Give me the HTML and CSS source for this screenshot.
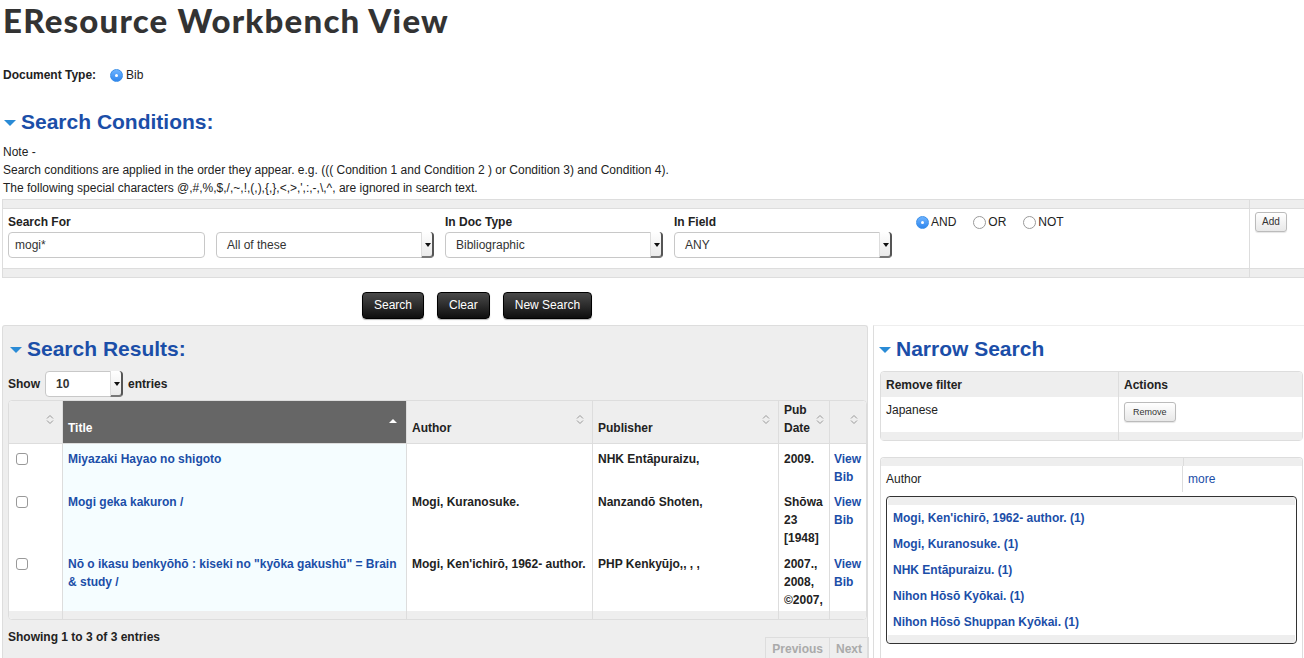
FILE: index.html
```html
<!DOCTYPE html>
<html>
<head>
<meta charset="utf-8">
<link rel="stylesheet" href="styles.css">
</head>
<body>
<div class="page">
  <h1 class="title">EResource Workbench View</h1>
  <div class="doctype"><span class="doclbl">Document Type:</span><span class="radio on"></span><span>Bib</span></div>

  <h2 class="section sc"><span class="tri"></span>Search Conditions:</h2>
  <div class="note">Note -<br>Search conditions are applied in the order they appear. e.g. ((( Condition 1 and Condition 2 ) or Condition 3) and Condition 4).<br>The following special characters @,#,%,$,/,~,!,(,),{,},&lt;,&gt;,',:,-,\,^, are ignored in search text.</div>

  <div class="cond">
    <div class="cond-bar"><div class="cb-main"></div><div class="cb-side"></div></div>
    <div class="cond-row">
      <div class="cond-main">
        <div class="fld">
          <label class="flbl">Search For</label>
          <div class="input w197">mogi*</div>
        </div>
        <div class="fld">
          <label class="flbl">&nbsp;</label>
          <div class="select w218">All of these<span class="arr"></span></div>
        </div>
        <div class="fld">
          <label class="flbl">In Doc Type</label>
          <div class="select w218">Bibliographic<span class="arr"></span></div>
        </div>
        <div class="fld">
          <label class="flbl">In Field</label>
          <div class="select w218">ANY<span class="arr"></span></div>
        </div>
        <div class="ops">
          <span class="op"><span class="radio on"></span>AND</span>
          <span class="op"><span class="radio"></span>OR</span>
          <span class="op"><span class="radio"></span>NOT</span>
        </div>
      </div>
      <div class="cond-side"><span class="smallbtn">Add</span></div>
    </div>
    <div class="cond-bar"><div class="cb-main"></div><div class="cb-side"></div></div>
  </div>

  <div class="buttons">
    <span class="bbtn">Search</span>
    <span class="bbtn">Clear</span>
    <span class="bbtn">New Search</span>
  </div>

  <div class="lower">
    <div class="results">
      <h2 class="section sr"><span class="tri"></span>Search Results:</h2>
      <div class="showrow"><span>Show</span><div class="select w78">10<span class="arr"></span></div><span>entries</span></div>
      <table class="rt">
        <thead>
          <tr>
            <th class="c0"><span class="sort"><svg width="8" height="11" viewBox="0 0 8 11"><path d="M1 4.5 L4 1.5 L7 4.5 M1 6.5 L4 9.5 L7 6.5" fill="none" stroke="#999" stroke-width="1"/></svg></span></th>
            <th class="c1 sorted">Title<span class="sort"><svg width="8" height="6" viewBox="0 0 8 6"><path d="M0 5 L4 1 L8 5 Z" fill="#fff"/></svg></span></th>
            <th class="c2">Author<span class="sort"><svg width="8" height="11" viewBox="0 0 8 11"><path d="M1 4.5 L4 1.5 L7 4.5 M1 6.5 L4 9.5 L7 6.5" fill="none" stroke="#999" stroke-width="1"/></svg></span></th>
            <th class="c3">Publisher<span class="sort"><svg width="8" height="11" viewBox="0 0 8 11"><path d="M1 4.5 L4 1.5 L7 4.5 M1 6.5 L4 9.5 L7 6.5" fill="none" stroke="#999" stroke-width="1"/></svg></span></th>
            <th class="c4">Pub<br>Date<span class="sort"><svg width="8" height="11" viewBox="0 0 8 11"><path d="M1 4.5 L4 1.5 L7 4.5 M1 6.5 L4 9.5 L7 6.5" fill="none" stroke="#999" stroke-width="1"/></svg></span></th>
            <th class="c5"><span class="sort"><svg width="8" height="11" viewBox="0 0 8 11"><path d="M1 4.5 L4 1.5 L7 4.5 M1 6.5 L4 9.5 L7 6.5" fill="none" stroke="#999" stroke-width="1"/></svg></span></th>
          </tr>
        </thead>
        <tbody>
          <tr class="r1">
            <td class="c0"><span class="chk"></span></td>
            <td class="c1"><a>Miyazaki Hayao no shigoto</a></td>
            <td class="c2"></td>
            <td class="c3">NHK Entāpuraizu,</td>
            <td class="c4">2009.</td>
            <td class="c5"><a>View Bib</a></td>
          </tr>
          <tr class="r2">
            <td class="c0"><span class="chk"></span></td>
            <td class="c1"><a>Mogi geka kakuron /</a></td>
            <td class="c2">Mogi, Kuranosuke.</td>
            <td class="c3">Nanzandō Shoten,</td>
            <td class="c4">Shōwa 23 [1948]</td>
            <td class="c5"><a>View Bib</a></td>
          </tr>
          <tr class="r3">
            <td class="c0"><span class="chk"></span></td>
            <td class="c1"><a>Nō o ikasu benkyōhō : kiseki no "kyōka gakushū" = Brain &amp; study /</a></td>
            <td class="c2">Mogi, Ken'ichirō, 1962- author.</td>
            <td class="c3">PHP Kenkyūjo,, , ,</td>
            <td class="c4">2007., 2008, ©2007,</td>
            <td class="c5"><a>View Bib</a></td>
          </tr>
          <tr class="rfoot">
            <td class="c0"></td><td class="c1"></td><td class="c2"></td><td class="c3"></td><td class="c4"></td><td class="c5"></td>
          </tr>
        </tbody>
      </table>
      <div class="rfooter">
        <span class="showing">Showing 1 to 3 of 3 entries</span>
        <div class="pager"><span class="pg">Previous</span><span class="pg">Next</span></div>
      </div>
    </div>

    <div class="narrow">
      <h2 class="section ns"><span class="tri"></span>Narrow Search</h2>
      <table class="ft">
        <tr class="fh"><th class="fa">Remove filter</th><th class="fb">Actions</th></tr>
        <tr class="fr"><td class="fa">Japanese</td><td class="fb"><span class="smallbtn rm">Remove</span></td></tr>
        <tr class="fbar"><td class="fa"></td><td class="fb"></td></tr>
      </table>

      <div class="facet">
        <div class="facet-bar"><div class="fba"></div><div class="fbb"></div></div>
        <div class="facet-row"><span class="fname">Author</span><span class="fmore"><a>more</a></span></div>
        <div class="facet-box">
          <div class="fbox-bar"></div>
          <ul class="flist">
            <li><a>Mogi, Ken'ichirō, 1962- author. (1)</a></li>
            <li><a>Mogi, Kuranosuke. (1)</a></li>
            <li><a>NHK Entāpuraizu. (1)</a></li>
            <li><a>Nihon Hōsō Kyōkai. (1)</a></li>
            <li><a>Nihon Hōsō Shuppan Kyōkai. (1)</a></li>
          </ul>
          <div class="fbox-bar bottom"></div>
        </div>
      </div>
    </div>
  </div>
</div>
</body>
</html>
```

FILE: styles.css
```css
* { box-sizing: border-box; }
html, body { margin: 0; padding: 0; background: #fff; }
body {
  font-family: "Liberation Sans", Arial, sans-serif;
  font-size: 12px;
  color: #222;
  overflow: hidden;
}
.page { padding: 0 0 0 2px; width: 1304px; height: 658px; overflow: hidden; }

.title {
  margin: 0;
  padding: 0 0 0 1px;
  font-family: "Lato", "Liberation Sans", sans-serif;
  font-weight: 900;
  font-size: 33px;
  line-height: 40px;
  color: #333;
  letter-spacing: 1.2px;
  white-space: nowrap;
}

.doctype {
  display: flex;
  align-items: center;
  margin-top: 28px;
  height: 14px;
  padding-left: 1px;
}
.doclbl { font-weight: bold; font-size: 12px; width: 107px; }

.radio {
  display: inline-block;
  width: 13px; height: 13px;
  border-radius: 50%;
  border: 1px solid #9a9a9a;
  background: #fff;
  margin-right: 3px;
  position: relative;
  flex: none;
}
.radio.on {
  border-color: #3b8fe8;
  background: linear-gradient(#6db3ff, #2f86ee);
}
.radio.on::after {
  content: "";
  position: absolute;
  left: 4px; top: 4px;
  width: 3px; height: 3px;
  border-radius: 50%;
  background: #fff;
}

.section {
  margin: 0;
  display: flex;
  align-items: center;
  font-family: "Liberation Sans", Arial, sans-serif;
  font-weight: bold;
  font-size: 21px;
  letter-spacing: 0;
  color: #1b4ea8;
  height: 24px;
}
.section .tri {
  width: 0; height: 0;
  border-left: 6px solid transparent;
  border-right: 6px solid transparent;
  border-top: 6px solid #2a8bd6;
  margin: 2px 5px 0 2px;
}
.section.sc { margin-top: 28px; }

.note {
  margin-top: 9px;
  font-size: 12px;
  line-height: 18px;
  padding-left: 1px;
}

.cond {
  margin-top: 2px;
  border: 1px solid #ddd;
  border-right: none;
}
.cond-bar { display: flex; height: 8px; background: #eee; }
.cb-main { flex: 1; }
.cb-side { width: 55px; border-left: 1px solid #ddd; }
.cond-row { display: flex; height: 61px; background: #fff; border-top: 1px solid #ddd; border-bottom: 1px solid #ddd; }
.cond-main { flex: 1; display: flex; padding: 6px 0 0 5px; gap: 11px; }
.cond-side { width: 55px; border-left: 1px solid #ddd; padding: 3px 0 0 5px; }
.fld { display: flex; flex-direction: column; }
.flbl { font-weight: bold; font-size: 12px; height: 17px; line-height: 14px; }
.input, .select {
  height: 26px;
  border: 1px solid #c8c8c8;
  border-radius: 4px;
  background: #fff;
  line-height: 24px;
  padding-left: 6px;
  font-size: 12px;
  color: #333;
  position: relative;
}
.select { padding-left: 10px; }
.w197 { width: 197px; }
.w218 { width: 218px; }
.w78 { width: 78px; }
.select .arr {
  position: absolute;
  right: -1px; top: -1px; bottom: -1px;
  width: 13px;
  border-right: 2px solid #555;
  border-bottom: 2px solid #777;
  border-radius: 0 4px 4px 0;
  background: linear-gradient(#fff, #eaeaea);
  border-left: 1px solid #ddd;
}
.select .arr::after {
  content: "";
  position: absolute;
  left: 3px; top: 11px;
  border-left: 3px solid transparent;
  border-right: 3px solid transparent;
  border-top: 4px solid #111;
}
.ops { display: flex; gap: 11px; margin-left: 13px; height: 14px; align-items: center; }
.op { display: flex; align-items: center; font-size: 12px; margin-right: 6px; }
.op .radio { margin-right: 2px; }

.smallbtn {
  display: inline-block;
  height: 20px;
  line-height: 18px;
  padding: 0 6px;
  border: 1px solid #bbb;
  border-radius: 3px;
  background: linear-gradient(#fff, #e8e8e8);
  font-size: 10px;
  color: #333;
  box-shadow: 0 1px 1px rgba(0,0,0,0.1);
}

.buttons {
  display: flex;
  gap: 13px;
  padding-left: 360px;
  margin-top: 14px;
  height: 27px;
}
.bbtn {
  display: inline-block;
  height: 27px;
  line-height: 25px;
  padding: 0 11px;
  border: 1px solid #000;
  border-radius: 4px;
  background: linear-gradient(#4a4a4a, #0e0e0e);
  color: #fff;
  font-size: 12px;
  box-shadow: 0 1px 1px rgba(0,0,0,0.3);
}

.lower { display: flex; margin-top: 6px; gap: 5px; }
.results {
  width: 866px;
  height: 340px;
  background: #eee;
  border: 1px solid #ddd;
  border-bottom: none;
  border-radius: 3px 3px 0 0;
  padding: 11px 0 0 5px;
}
.section.sr { padding-left: 0; }
.showrow { display: flex; align-items: center; gap: 5px; margin-top: 10px; font-weight: bold; }
.showrow .select { padding-left: 10px; }

.rt {
  margin-top: 3px;
  border-collapse: separate;
  border-spacing: 0;
  width: 858px;
  table-layout: fixed;
  font-weight: bold;
  font-size: 12px;
  border: 1px solid #ddd;
  border-radius: 4px;
  background: #fff;
}
.rt th {
  height: 43px;
  text-align: left;
  vertical-align: bottom;
  padding: 0 5px 6px 5px;
  background: #eee;
  border-right: 1px solid #ddd;
  border-bottom: 1px solid #ddd;
  position: relative;
  font-size: 12px;
  line-height: 18px;
  color: #222;
}
.rt th:last-child, .rt td:last-child { border-right: none; }
.rt th.c0 { border-top-left-radius: 4px; }
.rt th.c5 { border-top-right-radius: 4px; }
.rt th.sorted { background: #666; color: #fff; }
.rt th .sort { position: absolute; right: 8px; top: 13px; line-height: 0; }
.rt th.sorted .sort { top: 17px; right: 9px; }
.rt th.c4 .sort { right: 5px; }
.rt .c0 { width: 54px; }
.rt .c1 { width: 344px; }
.rt .c2 { width: 186px; }
.rt .c3 { width: 186px; }
.rt .c4 { width: 51px; }
.rt .c5 { width: 36px; }
.rt td {
  vertical-align: top;
  padding: 6px 5px 0 5px;
  border-right: 1px solid #ddd;
  line-height: 18px;
  color: #222;
}
.rt td.c1 { background: #f5fdff; }
.rt td.c4 { padding-right: 2px; }
.rt td.c5 { padding-left: 4px; padding-right: 0; }
.rt tr.r1 td { height: 43px; }
.rt tr.r2 td { height: 62px; }
.rt tr.r3 td { height: 62px; }
.rt tr.rfoot td { height: 8px; padding: 0; background: #eee; }
.rt tr.rfoot td.c0 { border-bottom-left-radius: 4px; }
.rt tr.rfoot td.c5 { border-bottom-right-radius: 4px; }
.rt a, .flist a, .fmore a { color: #1b4ea8; text-decoration: none; }
.chk {
  display: inline-block;
  width: 12px; height: 12px;
  border: 1px solid #999;
  border-radius: 3px;
  background: #fff;
  margin: 3px 0 0 2px;
}

.rfooter { display: flex; justify-content: space-between; align-items: flex-start; margin-top: 8px; }
.showing { font-weight: bold; padding-top: 2px; }
.pager { display: flex; margin-top: 9px; margin-right: -2px; }
.pg {
  height: 22px;
  line-height: 22px;
  padding: 0 6px;
  border: 1px solid #ddd;
  border-bottom: none;
  color: #aaa;
  font-weight: bold;
}
.pg + .pg { border-left: none; }

.narrow {
  flex: 1;
  border-left: 1px solid #ddd;
  padding: 11px 0 0 6px;
  height: 340px;
  border-top: 1px solid #eee;
}
.section.ns { margin-left: -3px; }
.ft {
  margin-top: 10px;
  width: 423px;
  border-collapse: separate;
  border-spacing: 0;
  border: 1px solid #ddd;
  border-radius: 4px;
  table-layout: fixed;
}
.ft .fa { width: 238px; border-right: 1px solid #ddd; }
.ft th {
  height: 25px;
  background: #eee;
  text-align: left;
  padding: 0 5px;
  font-weight: bold;
  font-size: 12px;
  vertical-align: middle;
}
.ft th.fa { border-top-left-radius: 4px; }
.ft th.fb { border-top-right-radius: 4px; }
.ft tr.fr td { height: 35px; vertical-align: top; padding: 6px 5px 0; font-size: 12px; }
.ft tr.fr td.fb { padding-top: 5px; }
.ft tr.fbar td { height: 8px; background: #eee; padding: 0; }
.smallbtn.rm { font-size: 9px; padding: 0 8px; height: 20px; line-height: 18px; }

.facet {
  margin-top: 16px;
  width: 423px;
  border: 1px solid #ddd;
  border-bottom: none;
  border-radius: 4px 4px 0 0;
  height: 210px;
}
.facet-bar { display: flex; height: 8px; background: #eee; border-radius: 4px 4px 0 0; }
.fba { width: 302px; }
.fbb { flex: 1; border-left: 1px solid #ddd; }
.facet-row { display: flex; height: 26px; align-items: center; font-size: 12px; }
.fname { width: 302px; padding-left: 5px; border-right: 1px solid #ddd; height: 100%; line-height: 26px; }
.fmore { padding-left: 5px; }
.facet-box {
  margin: 4px 5px 0 5px;
  border: 1px solid #333;
  border-radius: 4px;
  overflow: hidden;
}
.fbox-bar { height: 8px; background: #eee; margin: 0 1px; border-radius: 3px 3px 0 0; }
.fbox-bar.bottom { border-radius: 0 0 3px 3px; }
.flist { list-style: none; margin: 0; padding: 4px 0 0 6px; }
.flist li { height: 26px; line-height: 18px; font-weight: bold; font-size: 12px; }
.flist li:last-child { height: 22px; }
```
